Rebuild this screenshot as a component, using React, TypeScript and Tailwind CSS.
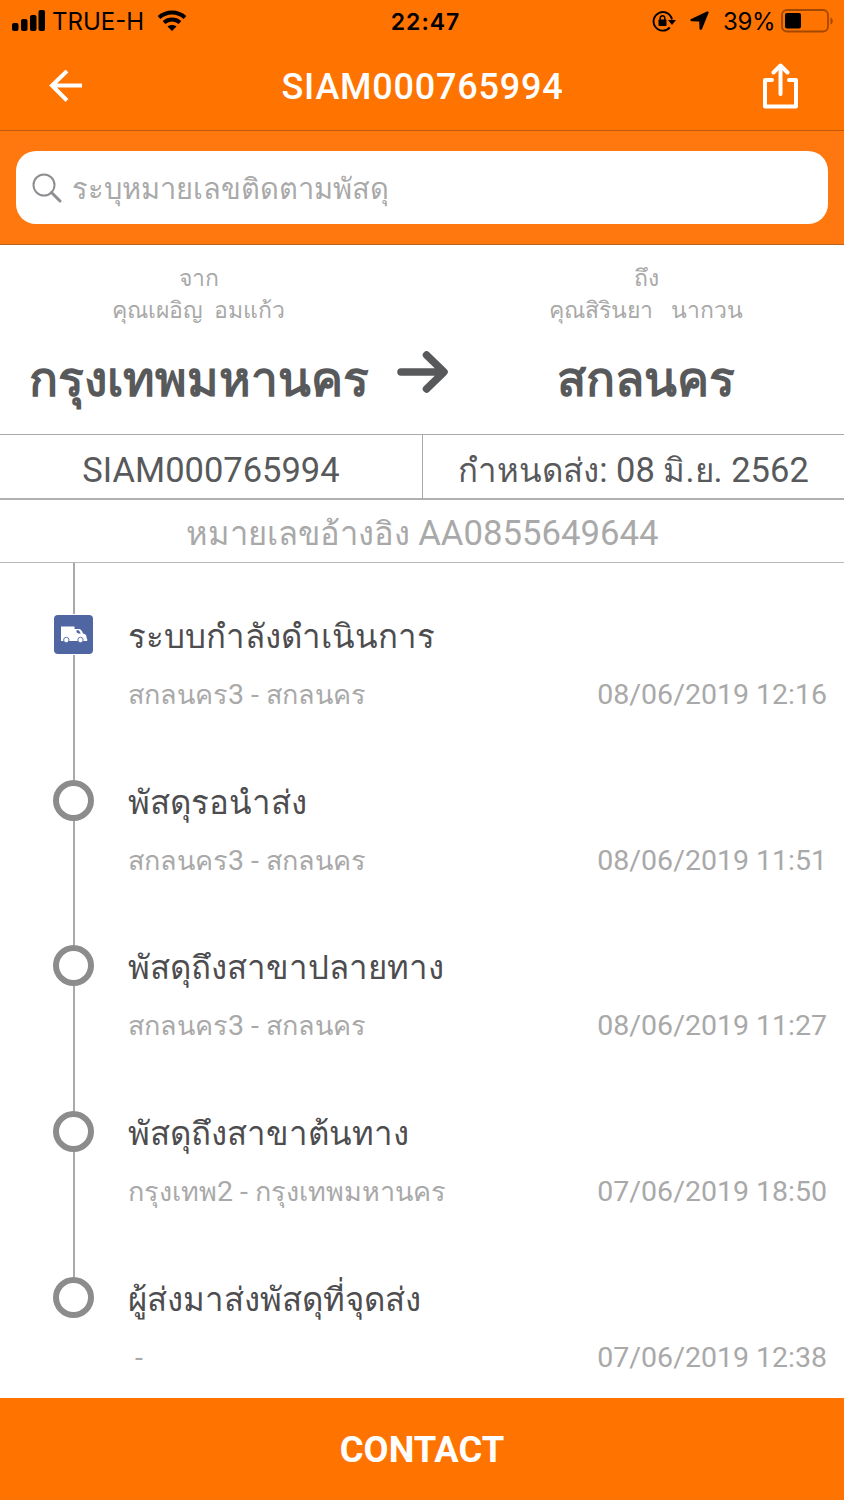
const events = [
  { title: "ระบบกำลังดำเนินการ", place: ["สกลนคร", "3 - ", "สกลนคร"], time: "08/06/2019 12:16", active: true },
  { title: "พัสดุรอนำส่ง", place: ["สกลนคร", "3 - ", "สกลนคร"], time: "08/06/2019 11:51" },
  { title: "พัสดุถึงสาขาปลายทาง", place: ["สกลนคร", "3 - ", "สกลนคร"], time: "08/06/2019 11:27" },
  { title: "พัสดุถึงสาขาต้นทาง", place: ["กรุงเทพ", "2 - ", "กรุงเทพมหานคร"], time: "07/06/2019 18:50" },
  { title: "ผู้ส่งมาส่งพัสดุที่จุดส่ง", place: ["", " -", ""], time: "07/06/2019 12:38" },
];

function StatusBar() {
  return (
    <div className="flex h-[42px] items-center pl-3 pr-2.5 font-['Inter',sans-serif] text-black">
      <div className="flex flex-1 items-center">
        <svg width="33" height="22" viewBox="0 0 33 22">
          <rect x="0" y="13" width="6.500" height="8" rx="2" />
          <rect x="9" y="9" width="6.500" height="12" rx="2" />
          <rect x="18" y="5" width="6.500" height="16" rx="2" />
          <rect x="26.500" y="0" width="6.500" height="21" rx="2" />
        </svg>
        <span className="ml-[7px] w-[93px] whitespace-nowrap pt-0.5 text-[24px] leading-10">TRUE-H</span>
        <svg className="ml-3" width="30" height="22" viewBox="0 0 30 22" fill="none" stroke="#000">
          <path d="M2 7.500C9.500 .8 20.500 .8 28 7.500" strokeWidth="4" />
          <path d="M7 12.500c4.700-4 11.300-4 16 0" strokeWidth="4" />
          <path d="M10.500 16.500c2.700-2 6.300-2 9 0L15 21z" fill="#000" stroke="none" />
        </svg>
      </div>
      <span className="pl-[5px] pt-0.5 text-[23px] font-semibold leading-10 tracking-[1px]">22:47</span>
      <div className="flex flex-1 items-center justify-end">
        <svg width="24" height="22" viewBox="0 0 24 22" fill="none" stroke="#000">
          <path d="M17.800 17.500A9.300 9.300 0 1 1 20 9.500" strokeWidth="1.900" />
          <path d="M16 10h8l-4 5z" fill="#000" stroke="none" />
          <rect x="6.500" y="9.500" width="8" height="6.500" rx="0.800" fill="#000" stroke="none" />
          <path d="M8.200 10V8a2.300 2.300 0 0 1 4.600 0v2" strokeWidth="1.500" />
        </svg>
        <svg className="ml-3.5" width="19" height="20" viewBox="0 0 19 20">
          <path d="M18.600 1.800 12 18c-.5 1.300-2.400 1.100-2.500-.3L9.200 10.500l-7.500-.3C.1 10.100-.2 8.400 1.200 7.900L17 .6c1.200-.5 2 .2 1.600 1.200z" />
        </svg>
        <span className="ml-[14px] w-[52px] whitespace-nowrap pt-0.5 text-[24px] leading-10 tracking-[-0.400px]">39%</span>
        <svg className="ml-1.5" width="53" height="24" viewBox="0 0 53 24">
          <rect x="1" y="1" width="46" height="21.500" rx="5" fill="none" stroke="#a34800" strokeWidth="1.800" />
          <rect x="4" y="4" width="16" height="15.500" rx="2" />
          <path d="M49.500 8.500c3 1 3 6 0 7z" fill="#a34800" />
        </svg>
      </div>
    </div>
  );
}

function TruckBadge() {
  return (
    <svg width="39" height="39" viewBox="0 0 39 39">
      <rect width="39" height="39" rx="4" fill="#5066a3" />
      <path
        d="M7 11.500h13.500v2.500h4.500c1.500 0 2.300 1 3 2.300l1 2.200c2.500.7 3.500 1.500 3.500 3.500v1.500h.7v2.500H7z"
        fill="#fff"
      />
      <path d="M22.500 15.200h2.300l2 3.300h-2.300l-2-1.300z" fill="#5066a3" />
      <circle cx="12.300" cy="25" r="2.700" fill="#fff" stroke="#5066a3" strokeWidth="0.900" />
      <circle cx="26.500" cy="25" r="2.700" fill="#fff" stroke="#5066a3" strokeWidth="0.900" />
    </svg>
  );
}

function Party({ label, name, city, className }: { label: string; name: string; city: string; className: string }) {
  return (
    <div className={`flex flex-col items-center whitespace-pre pt-[18px] ${className}`}>
      <p className="h-8 text-[23px] leading-8 text-[#a9a9a9]">{label}</p>
      <p className="h-8 text-[23px] leading-8 text-[#a9a9a9]">{name}</p>
      <p className="mt-[23px] text-[48px] font-bold leading-[60px] text-[#58595b]">{city}</p>
    </div>
  );
}

export default function App() {
  return (
    <div className="flex h-[1500px] w-[844px] flex-col overflow-hidden bg-white font-['Roboto',monospace]">
      <header className="h-[131px] border-b border-[#c05a0a] bg-[#ff7300]">
        <StatusBar />
        <div className="flex h-[88px] items-center justify-between pl-[49px] pr-[46px] text-white">
          <svg width="33" height="33" viewBox="0 0 33 33" fill="none" stroke="#fff" strokeWidth="4">
            <path d="M33 15.500H3M18 1l-15 14.500 15 15" />
          </svg>
          <h1 className="pt-0.5 text-[36px] font-medium leading-[44px] tracking-[0.780px]">SIAM000765994</h1>
          <svg width="35" height="46" viewBox="0 0 35 46" fill="none" stroke="#fff" strokeWidth="4" strokeLinejoin="round" strokeLinecap="round">
            <path d="M9 17H2v26.500h31V17h-7" />
            <path d="M17.500 31V4" />
            <path d="M10.500 9.500 17.500 2.500l7 7" />
          </svg>
        </div>
      </header>

      {/* Search */}
      <div className="h-[114px] border-b border-[#b5651d] bg-[#ff780f] px-4 pt-5">
        <div className="flex h-[73px] items-center rounded-[20px] bg-white pl-4">
          <svg width="30" height="30" viewBox="0 0 30 30" fill="none" stroke="#8e8e93">
            <circle cx="12" cy="12" r="10.500" strokeWidth="2" />
            <path d="m19.500 19.500 8.500 8.500" strokeWidth="3" strokeLinecap="round" />
          </svg>
          <span className="ml-[10px] whitespace-nowrap pt-0.5 text-[29px] leading-10 text-[#a9a9a9]">ระบุหมายเลขติดตามพัสดุ</span>
        </div>
      </div>

      {/* Route */}
      <section className="flex h-[190px] border-b border-[#a9a9a9]">
        <Party className="w-[397px]" label="จาก" name="คุณเผอิญ  อมแก้ว" city="กรุงเทพมหานคร" />
        <svg className="mt-[105px] shrink-0" width="51" height="44" viewBox="0 0 51 44" fill="none" stroke="#58595b" strokeWidth="7.500" strokeLinecap="round" strokeLinejoin="round">
          <path d="M4 22h42M29.500 5 47 22 29.500 39" />
        </svg>
        <Party className="w-[396px]" label="ถึง" name="คุณสิรินยา   นากวน" city="สกลนคร" />
      </section>

      <section className="grid h-[65px] grid-cols-[423px_421px] border-b-2 border-[#b0b0b0] text-center text-[34.500px] leading-[71px] text-[#58595b]">
        <div className="h-[64px] border-r border-[#a9a9a9]">SIAM000765994</div>
        <div className="whitespace-nowrap">
          <span className="text-[33px]">กำหนดส่ง</span>: 08 <span className="text-[33px]">มิ</span>.<span className="text-[33px]">ย</span>. 2562
        </div>
      </section>
      <section className="h-[63px] whitespace-nowrap border-b border-[#b8b8b8] text-center text-[34.700px] leading-[67px] text-[#a9a9a9]">
        <span className="text-[32.700px]">หมายเลขอ้างอิง</span> AA0855649644
      </section>

      {/* Timeline */}
      <main className="flex-1 overflow-hidden">
        <div className="ml-[72.500px] h-[51px] w-[2px] bg-[#a9a9a9]" />
        {events.map((e, i) => (
          <div key={e.time} className="flex h-[165.700px]">
            <div className="ml-[53px] flex w-[41px] flex-col items-center">
              {e.active ? (
                <div className="flex h-[41px] items-center">
                  <TruckBadge />
                </div>
              ) : (
                <div className="h-[41px] w-[41px] shrink-0 rounded-full border-[6px] border-[#8c8c8c]" />
              )}
              {i < events.length - 1 && <div className="w-[2px] flex-1 bg-[#a9a9a9]" />}
            </div>
            <div className="ml-[34px] flex-1 pr-[17px]">
              <h2 className="h-[46px] whitespace-nowrap text-[33px] leading-[45px] text-[#4d4d4f]">{e.title}</h2>
              <div className="mt-[14px] flex h-10 justify-between whitespace-pre text-[28.500px] leading-[41px] text-[#a9a9a9]">
                <span>
                  <span className="text-[27px]">{e.place[0]}</span>
                  {e.place[1]}
                  <span className="text-[27px]">{e.place[2]}</span>
                </span>
                <span>{e.time}</span>
              </div>
            </div>
          </div>
        ))}
      </main>

      <button className="h-[102px] bg-[#ff7300] pt-px text-[36.300px] font-bold leading-[102px] text-white">CONTACT</button>
    </div>
  );
}
